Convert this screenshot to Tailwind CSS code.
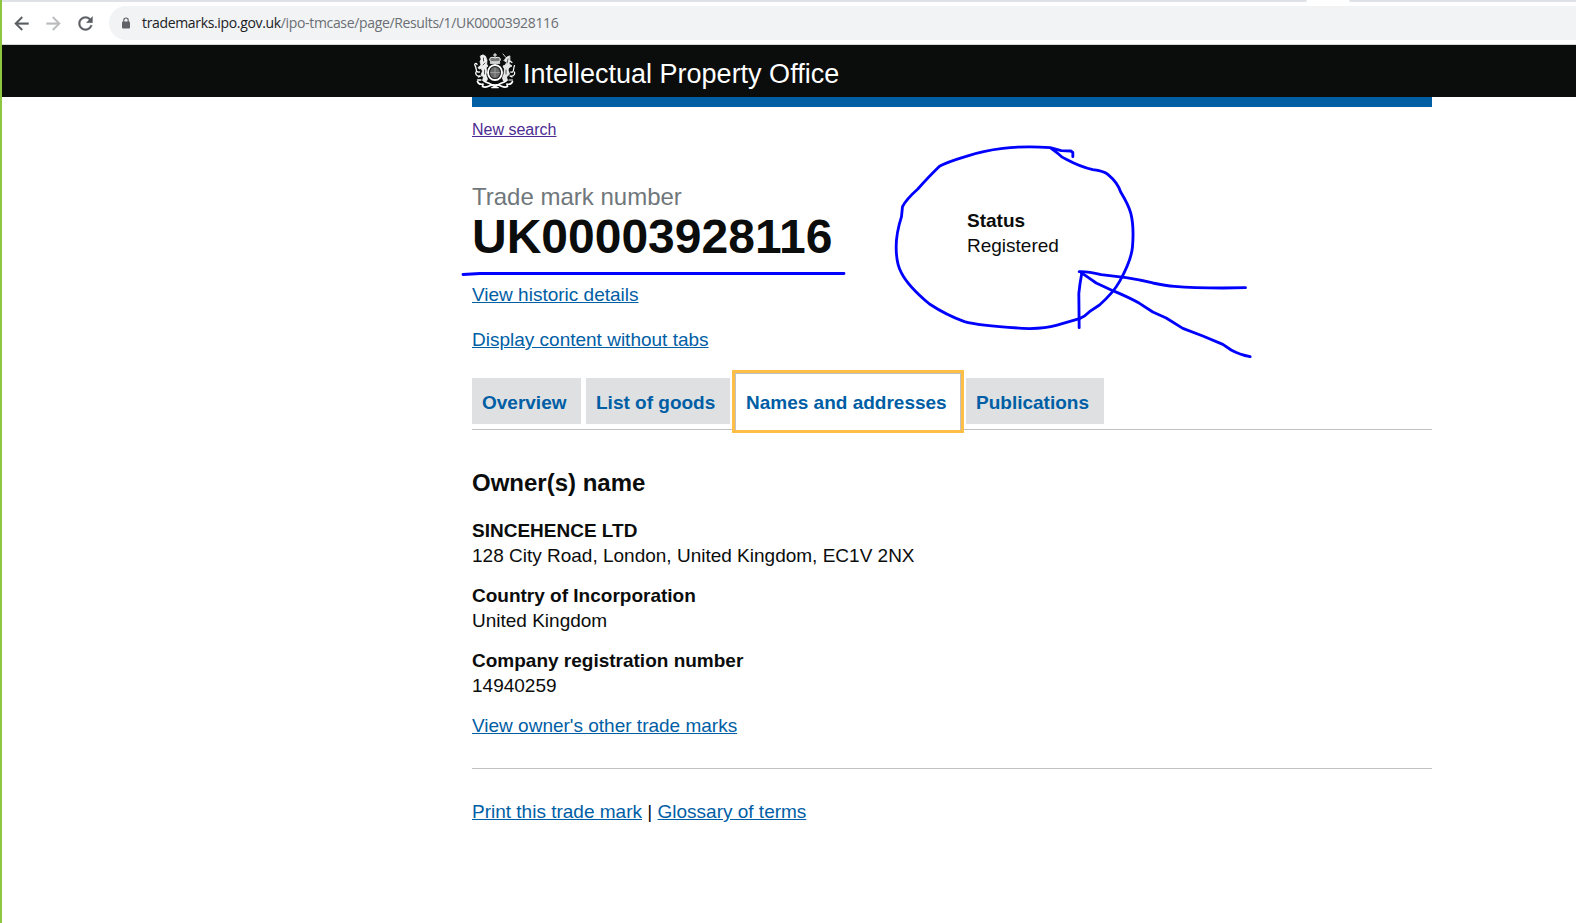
<!DOCTYPE html>
<html lang="en">
<head>
<meta charset="utf-8">
<title>Trade mark number UK00003928116</title>
<script src="https://cdn.jsdelivr.net/npm/@tailwindcss/browser@4"></script>
</head>
<body class="relative h-[923px] w-[1576px] overflow-hidden border-l-2 border-[#8dc63f] bg-white font-['Liberation_Sans',Arial,sans-serif] text-[19px] leading-[25px] text-[#0b0c0c]">
  <div class="flex h-[2px] justify-between">
    <div class="w-[1305px] rounded-br-[2px] bg-[#dee1e6]"></div>
    <div class="w-[227px] rounded-bl-[2px] bg-[#dee1e6]"></div>
  </div>
  <nav class="flex h-[43px] items-center border-b border-[#d5d7da] pl-[9px]">
    <svg class="size-[21px] shrink-0" viewBox="0 0 24 24" fill="#5a5e63"><path d="M20 11H7.83l5.59-5.59L12 4l-8 8 8 8 1.41-1.41L7.83 13H20v-2z" stroke="#5a5e63" stroke-width=".4"/></svg>
    <svg class="ml-[11px] size-[21px] shrink-0" viewBox="0 0 24 24" fill="#babcbe"><path d="M12 4l-1.41 1.41L16.17 11H4v2h12.17l-5.58 5.59L12 20l8-8z" stroke="#babcbe" stroke-width=".4"/></svg>
    <svg class="ml-[11px] size-[21px] shrink-0" viewBox="0 0 24 24" fill="#5a5e63"><path d="M17.65 6.35C16.2 4.9 14.21 4 12 4c-4.42 0-7.99 3.58-7.99 8s3.57 8 7.99 8c3.73 0 6.84-2.55 7.73-6h-2.08c-.82 2.33-3.04 4-5.65 4-3.31 0-6-2.69-6-6s2.69-6 6-6c1.66 0 3.14.69 4.22 1.78L13 11h7V4l-2.35 2.35z" stroke="#5a5e63" stroke-width=".4"/></svg>
    <div class="ml-[13px] flex h-[34px] flex-1 items-center rounded-l-full bg-[#f1f3f4] pl-[12px]">
      <svg class="mr-[11px] h-[12px] w-[10px]" viewBox="0 0 10 12"><rect x="1" y="4.5" width="8" height="7" rx="1" fill="#5f6368"/><path d="M2.8 5V3.2a2.2 2.2 0 0 1 4.4 0V5" fill="none" stroke="#5f6368" stroke-width="1.2"/></svg>
      <span class="whitespace-nowrap font-['Open_Sans',sans-serif] text-[14px] leading-[18px] tracking-[-0.34px] text-[#6b6f74]"><span class="text-[#202124]">trademarks.ipo.gov.uk</span>/ipo-tmcase/page/Results/1/UK00003928116</span>
    </div>
  </nav>
  <header class="h-[52px] bg-[#0b0c0c] pl-[472px]">
    <div class="flex h-full items-center gap-[7px]">
      <svg class="h-[38px] w-[42px] shrink-0" viewBox="0 0 42 38" fill="none" stroke="#fff" stroke-linecap="round" stroke-linejoin="round">
        <!-- crown -->
        <path d="M21 1.500v3.500M19.500 3h3" stroke-width="1"/>
        <path d="M16.500 9.500c-3-4 2-5 4.500-3.500c2.500-1.500 7.500-.5 4.500 3.500z" fill="#777" stroke-width="1"/>
        <path d="M16.500 11h9" stroke-width="1.500"/>
        <!-- shield in its garter -->
        <ellipse cx="21" cy="20.500" rx="7" ry="7.500" stroke-width="1.900"/>
        <ellipse cx="21" cy="20.500" rx="4.900" ry="5.500" fill="#6d6d6d" stroke="#555" stroke-width=".6"/>
        <path d="M21 16v9M16.500 20.500h9" stroke="#a5a5a5" stroke-width=".8"/>
        <!-- lion -->
        <path d="M6.500 4L9 2.800l2.500 1.400 1.500 4-.3 4L14 14l-1.800 1.800L12.500 19l-.5 4 1.500 4-1 2-4-.5 1-3.500-2.500-2 1.500-4L7 16.500l-2 .5L4 15.500l3-2.500-1-3.500 1-2z" fill="#eee" stroke-width=".7"/>
        <path d="M7 28H3.500M7 24l-2.500 1M5.500 20C1 21 3 16 1 13.500c-1-2 1.500-3 2-1M5.500 24C2 24.500 1.500 21.500 2 20" stroke-width="1.300"/>
        <path d="M9.500 6v3M11 11l-2 2M10.500 18v4" stroke="#333" stroke-width=".8"/>
        <!-- unicorn -->
        <path d="M29 2l3 3.500M35.500 4L33 5l-3 3.500 1 1 2-.5-1.500 4-2.500 1 1.500 3-.5 5-1.500 4 1 3 4-.5-1-3.500 3-3-1.500-4L35 15.500l3-1.500-3-2 .8-4z" fill="#e4e4e4" stroke-width=".8"/>
        <path d="M35 28h3.500M36 24l2 1M36.500 20c4 1 2.500-3 4-6.500M36.500 24c4 .5 4.500-2.500 4-4M36 9l2 1.500" stroke-width="1.200"/>
        <path d="M34 7l-1 4M32 18v4" stroke="#333" stroke-width=".8"/>
        <!-- motto ribbon -->
        <path d="M3.500 29.500c1 3 3.500 3 5.500 2.500l-.5 2.500c5 2.500 6-2.500 12.500-1.500c6.500-1 7.500 4 12.500 1.500l-.5-2.500c2 .5 4.500.5 5.500-2.500M10 29c5 3 7 2 11 6c4-4 6-3 11-6" stroke-width="1.700"/>
        <path d="M18 35.500h6" stroke-width="1.700"/>
      </svg>
      <span class="mt-[5px] whitespace-nowrap text-[27px] leading-[32px] text-white">Intellectual Property Office</span>
    </div>
  </header>
  <main class="ml-[470px] w-[960px]">
    <div class="h-[10px] bg-[#005ea5]"></div>
    <div class="mt-[13px] text-[16px] leading-[20px]"><a href="#" class="text-[#4c2c92] underline">New search</a></div>
    <div class="mt-[42px] flex h-[92px]">
      <div class="w-[495px]">
        <div class="text-[24px] leading-[30px] text-[#6f777b]">Trade mark number</div>
        <h1 class="text-[48px] font-bold leading-[50px]">UK00003928116</h1>
      </div>
      <div class="pt-[26px]"><p class="font-bold">Status</p><p>Registered</p></div>
    </div>
    <div class="mt-[8px] text-[#005ea5]"><a href="#" class="underline">View historic details</a></div>
    <div class="mt-[20px] text-[#005ea5]"><a href="#" class="underline">Display content without tabs</a></div>
    <div class="mt-[21px] flex h-[57px] items-start border-b border-[#bfc1c3] font-bold text-[#005ea5]">
      <a href="#" class="mt-[5px] h-[46px] w-[109px] whitespace-nowrap bg-[#dee0e2] pl-[10px] pt-[12px]">Overview</a>
      <a href="#" class="ml-[5px] mt-[5px] h-[46px] w-[144px] whitespace-nowrap bg-[#dee0e2] pl-[10px] pt-[12px]">List of goods</a>
      <a href="#" class="ml-[5px] h-[57px] w-[226px] whitespace-nowrap border border-b-0 border-[#bfc1c3] bg-white pl-[10px] pt-[16px] outline-3 outline-[#ffbf47]">Names and addresses</a>
      <a href="#" class="ml-[5px] mt-[5px] h-[46px] w-[138px] whitespace-nowrap bg-[#dee0e2] pl-[10px] pt-[12px]">Publications</a>
    </div>
    <section class="border-b border-[#bfc1c3] pb-[30px] pt-[38px]">
      <h2 class="mb-[20px] text-[24px] font-bold leading-[30px]">Owner(s) name</h2>
      <p class="font-bold">SINCEHENCE LTD</p>
      <p class="mb-[15px]">128 City Road, London, United Kingdom, EC1V 2NX</p>
      <p class="font-bold">Country of Incorporation</p>
      <p class="mb-[15px]">United Kingdom</p>
      <p class="font-bold">Company registration number</p>
      <p class="mb-[15px]">14940259</p>
      <p><a href="#" class="text-[#005ea5] underline">View owner's other trade marks</a></p>
    </section>
    <p class="mt-[30px]"><a href="#" class="text-[#005ea5] underline">Print this trade mark</a> | <a href="#" class="text-[#005ea5] underline">Glossary of terms</a></p>
  </main>
  <svg class="pointer-events-none absolute -left-[2px] top-0" width="1576" height="923" fill="none" stroke="#0000ff" stroke-linecap="round" stroke-linejoin="round">
    <path d="M463 274.500L480 273.500H844" stroke-width="2.800"/>
    <g transform="translate(879.500 130) scale(.33333)" stroke-width="8.500">
      <path d="M580 80V67L574 63L545 62L512 53Q440 47 370 55Q310 62 260 79Q200 97 180 109Q150 138 115 177Q80 208 69 230L66 260Q50 310 50 350Q50 400 65 427Q85 468 150 522Q200 555 255 575Q300 588 450 596Q500 594 530 586L600 566Q615 560 630 545L660 525Q700 490 720 455Q756 390 759 350Q764 290 754 250Q747 225 724 187Q715 158 685 133Q673 123 640 119Q605 112 560 88Q545 81 535 70L512 53"/>
      <path d="M599 425Q625 424 665 434L740 443Q780 449 820 459Q860 468 885 469Q940 474 1030 474L1098 473"/>
      <path d="M605 428Q630 445 650 459L700 482Q750 503 780 520L820 546L860 564L910 595L970 618L1030 643L1055 660Q1080 674 1112 680"/>
      <path d="M607 429Q601 460 598 490L599 593"/>
    </g>
  </svg>
</body>
</html>
